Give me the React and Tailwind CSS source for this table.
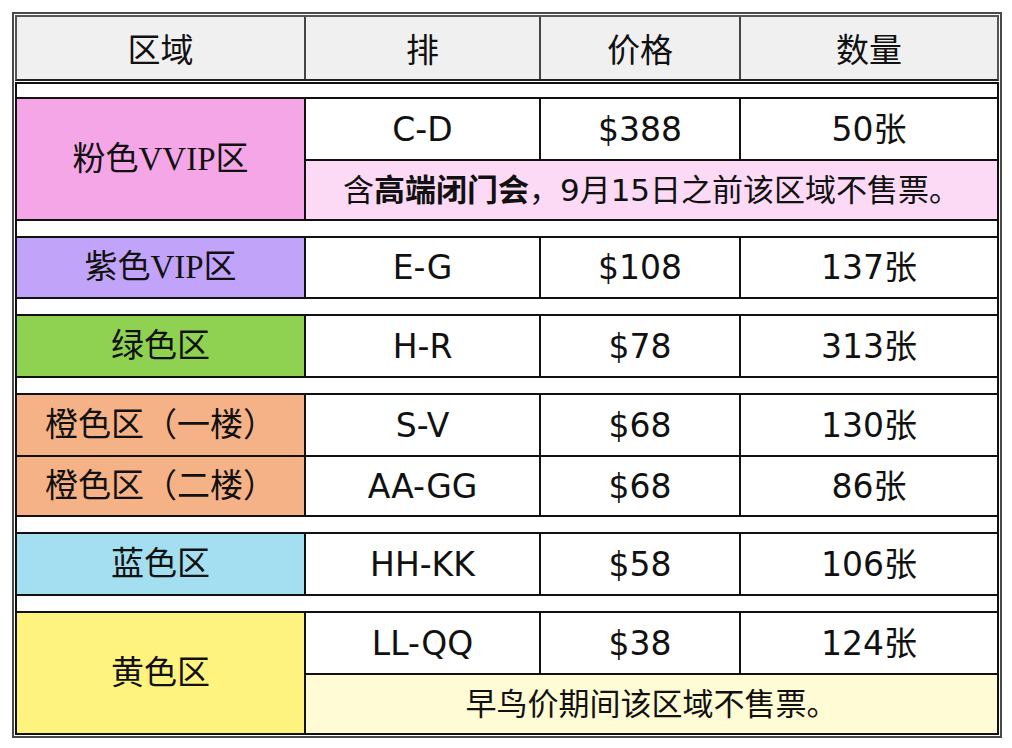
import React from "react";

const CJK = "font-['Noto_Sans_CJK_SC',sans-serif]";
const DATA = "font-['DejaVu_Sans','Noto_Sans_CJK_SC',sans-serif]";
const ZONE = "font-['Liberation_Serif','Noto_Sans_CJK_SC',serif]";

function Cells({ cells }) {
  return (
    <>
      <div className={`w-[235px] border-r-2 border-[#111] flex items-center justify-center ${DATA} text-[33px] text-[#111] leading-none`}>
        {cells[0]}
      </div>
      <div className={`w-[200px] border-r-2 border-[#111] flex items-center justify-center ${DATA} text-[33px] text-[#111] leading-none`}>
        {cells[1]}
      </div>
      <div className={`flex-1 flex items-center justify-center ${DATA} text-[33px] text-[#111] leading-none`}>
        {cells[2]}
      </div>
    </>
  );
}

function Zone({ name, bg }) {
  return (
    <div className={`w-[289px] border-r-2 border-[#111] ${bg} flex items-center justify-center ${ZONE} text-[33px] text-[#111] leading-none`}>
      {name}
    </div>
  );
}

function NoteGroup({ name, bg, cells, note, noteBg }) {
  return (
    <div className="flex border-y-2 border-[#111]">
      <Zone name={name} bg={bg} />
      <div className="flex-1 flex flex-col">
        <div className="flex h-[60px] bg-white">
          <Cells cells={cells} />
        </div>
        <div className={`h-[60px] border-t-2 border-[#111] ${noteBg} flex items-center justify-center ${DATA} text-[31px] text-[#111] leading-none`}>
          {note}
        </div>
      </div>
    </div>
  );
}

function Group({ rows, h = "h-[60px]" }) {
  return (
    <div className="flex flex-col border-y-2 border-[#111]">
      {rows.map((r, i) => (
        <div key={i} className={`flex ${i === 0 ? h : "h-[60px] border-t-2 border-[#111]"} bg-white`}>
          <Zone name={r.name} bg={r.bg} />
          <Cells cells={r.cells} />
        </div>
      ))}
    </div>
  );
}

export default function App() {
  return (
    <div className="w-[1012px] h-[748px] bg-white pt-[12px] pl-[12px]">
      <div className="w-[990px] border-2 border-[#4a4a4a] p-px">
        {/* header */}
        <div className={`flex h-[66px] border-2 border-[#555] border-b-[#222] bg-[#f0f0f0] ${CJK} text-[33px] text-[#111] leading-none`}>
          <div className="w-[289px] border-r-2 border-[#444] flex items-center justify-center">区域</div>
          <div className="w-[235px] border-r-2 border-[#444] flex items-center justify-center">排</div>
          <div className="w-[200px] border-r-2 border-[#444] flex items-center justify-center">价格</div>
          <div className="flex-1 flex items-center justify-center">数量</div>
        </div>
        {/* body */}
        <div className="mt-px border-x-2 border-t-2 border-[#111] bg-white flex flex-col">
          <div className="h-[13px]" />
          <NoteGroup
            name="粉色VVIP区"
            bg="bg-[#f5a6e6]"
            cells={["C-D", "$388", "50张"]}
            noteBg="bg-[#fcdaf6]"
            note={
              <span>
                含<span className="font-bold">高端闭门会</span>，9月15日之前该区域不售票。
              </span>
            }
          />
          <div className="h-[15px]" />
          <Group h="h-[59px]" rows={[{ name: "紫色VIP区", bg: "bg-[#c2a3fa]", cells: ["E-G", "$108", "137张"] }]} />
          <div className="h-[15px]" />
          <Group rows={[{ name: "绿色区", bg: "bg-[#8fd150]", cells: ["H-R", "$78", "313张"] }]} />
          <div className="h-[15px]" />
          <Group
            rows={[
              { name: "橙色区（一楼）", bg: "bg-[#f5b286]", cells: ["S-V", "$68", "130张"] },
              { name: "橙色区（二楼）", bg: "bg-[#f5b286]", cells: ["AA-GG", "$68", "86张"] },
            ]}
          />
          <div className="h-[15px]" />
          <Group rows={[{ name: "蓝色区", bg: "bg-[#a3dff0]", cells: ["HH-KK", "$58", "106张"] }]} />
          <div className="h-[15px]" />
          <NoteGroup
            name="黄色区"
            bg="bg-[#fff380]"
            cells={["LL-QQ", "$38", "124张"]}
            noteBg="bg-[#fffbd4]"
            note={<span>早鸟价期间该区域不售票。</span>}
          />
        </div>
      </div>
    </div>
  );
}
